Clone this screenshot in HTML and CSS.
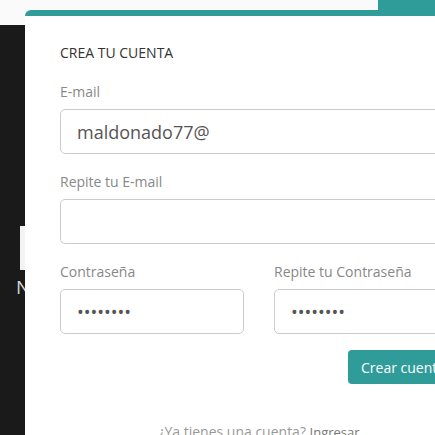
FILE: index.html
```html
<!DOCTYPE html>
<html lang="es">
<head>
<meta charset="utf-8">
<title>Crea tu cuenta</title>
<link rel="stylesheet" href="styles.css">
</head>
<body>
<div class="topbar"><div class="topbar-tab"></div></div>
<div class="stage">
  <div class="backdrop">
    <div class="backdrop-box"></div>
    <div class="backdrop-letter">N</div>
  </div>
  <form class="card">
    <h1 class="card-title">CREA TU CUENTA</h1>
    <div class="field">
      <label class="field-label">E-mail</label>
      <input class="field-input" type="text" value="maldonado77@">
    </div>
    <div class="field">
      <label class="field-label">Repite tu E-mail</label>
      <input class="field-input" type="text" value="">
    </div>
    <div class="field-row">
      <div class="field">
        <label class="field-label">Contraseña</label>
        <input class="field-input" type="password" value="12345678">
      </div>
      <div class="field">
        <label class="field-label">Repite tu Contraseña</label>
        <input class="field-input" type="password" value="12345678">
      </div>
    </div>
    <div class="actions">
      <button class="btn-primary" type="button">Crear cuenta</button>
    </div>
    <p class="footer-text">¿Ya tienes una cuenta? <a class="footer-link">Ingresar</a></p>
  </form>
</div>
</body>
</html>
```

FILE: styles.css
```css
* { box-sizing: border-box; }
html, body { margin: 0; padding: 0; }
body {
  width: 435px;
  height: 435px;
  overflow: hidden;
  background: #fafafa;
  font-family: "Open Sans", "Liberation Sans", sans-serif;
}
.topbar {
  height: 10px;
  display: flex;
  justify-content: flex-end;
}
.topbar-tab {
  width: 57px;
  background: #2f9c9a;
}
.stage {
  display: flex;
  align-items: flex-start;
}
.backdrop {
  flex-shrink: 0;
  width: 25px;
  height: 420px;
  margin-top: 15px;
  background: #1a1a1a;
  overflow: hidden;
  padding-top: 201px;
}
.backdrop-box {
  margin-left: 20px;
  width: 20px;
  height: 44px;
  background: #f3f3f3;
}
.backdrop-letter {
  margin-left: 16px;
  margin-top: 5px;
  color: #d6d6d6;
  font-size: 19px;
  line-height: 24px;
}
.card {
  flex-shrink: 0;
  width: 468px;
  height: 440px;
  margin: 0;
  background: #fff;
  border-top: 6px solid #2f9c9a;
  border-top-left-radius: 6px;
  padding: 27px 35px 0;
}
.card-title {
  margin: 0 0 20px;
  font-size: 14px;
  line-height: 19px;
  font-weight: 400;
  color: #333;
}
.field {
  display: flex;
  flex-direction: column;
  margin-bottom: 18px;
}
.field-label {
  font-size: 14px;
  line-height: 19px;
  color: #888;
  margin-bottom: 8px;
}
.field-input {
  height: 45px;
  width: 100%;
  border: 1px solid #cccccc;
  border-radius: 5px;
  padding: 0 16px;
  font-family: "Open Sans", "Liberation Sans", sans-serif;
  font-size: 18px;
  color: #555;
  background: #fff;
  outline: none;
}
.field-row {
  display: grid;
  grid-template-columns: 184px 184px;
  column-gap: 30px;
}
.field-row .field { margin-bottom: 16px; }
.actions {
  display: flex;
  justify-content: flex-end;
}
.btn-primary {
  height: 34px;
  width: 110px;
  border: 0;
  border-radius: 4px;
  background: #2f9c9a;
  color: #fff;
  font-family: "Open Sans", "Liberation Sans", sans-serif;
  font-size: 14px;
  padding: 0 13px;
  text-align: left;
  white-space: nowrap;
}
.footer-text {
  margin: 38px 0 0;
  text-align: center;
  font-size: 14px;
  line-height: 19px;
  color: #999;
}
.footer-link {
  color: #777;
  font-size: 13px;
}
```
